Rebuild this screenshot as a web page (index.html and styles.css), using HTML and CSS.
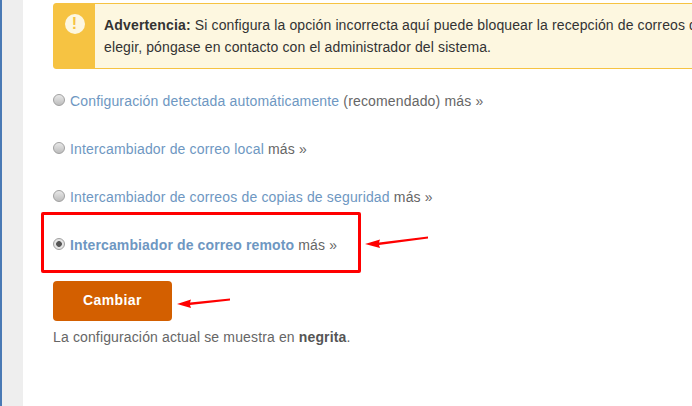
FILE: index.html
```html
<!DOCTYPE html>
<html lang="es">
<head>
    <meta charset="UTF-8">
    <meta name="viewport" content="width=device-width, initial-scale=1.0">
    <title>Enrutamiento de correo</title>
    <link rel="stylesheet" href="styles.css">
</head>
<body>
    <div class="side-nav"></div>
    <div class="content">
        <div class="alert">
            <div class="alert-icon">
                <span class="alert-badge">!</span>
            </div>
            <div class="alert-text">
                <strong>Advertencia:</strong> Si configura la opción incorrecta aquí puede bloquear la recepción de correos de<br>
                elegir, póngase en contacto con el administrador del sistema.
            </div>
        </div>
        <form class="options">
            <label class="option">
                <input type="radio" name="routing">
                <span><a href="#">Configuración detectada automáticamente</a> (recomendado) <span class="more">más »</span></span>
            </label>
            <label class="option">
                <input type="radio" name="routing">
                <span><a href="#">Intercambiador de correo local</a> <span class="more">más »</span></span>
            </label>
            <label class="option">
                <input type="radio" name="routing">
                <span><a href="#">Intercambiador de correos de copias de seguridad</a> <span class="more">más »</span></span>
            </label>
            <label class="option">
                <input type="radio" name="routing" checked>
                <span><a href="#" class="current">Intercambiador de correo remoto</a> <span class="more">más »</span></span>
            </label>
            <button type="button" class="submit-btn">Cambiar</button>
            <p class="note">La configuración actual se muestra en <strong>negrita</strong>.</p>
        </form>
    </div>

    <!-- screenshot annotations -->
    <div class="red-box"></div>
    <svg class="arrow arrow-radio" width="70" height="16" viewBox="0 0 70 16">
        <polygon points="0,11 15,6.5 14,9.5 63,3.5 63,5.5 14,12 15,15" fill="#f00"/>
    </svg>
    <svg class="arrow arrow-button" width="60" height="14" viewBox="0 0 60 14">
        <polygon points="0,9 14,4.5 13,7.5 53,3.5 53,5.5 13,10 14,13" fill="#f00"/>
    </svg>
</body>
</html>
```

FILE: styles.css
```css
html, body {
    height: 100%;
}
body {
    font-family: 'Liberation Sans', Arial, sans-serif;
    font-size: 14px;
    letter-spacing: 0.12px;
    margin: 0;
    display: flex;
    overflow: hidden;
    background: #fff;
    color: #666;
}
.side-nav {
    flex: none;
    width: 21px;
    background: #eee;
    border-left: 2px solid #4a7ab5;
}
.content {
    flex: none;
    padding: 3px 0 0 30px;
}
.alert {
    display: flex;
    width: 660px;
    height: 66px;
    box-sizing: border-box;
    border: 1px solid #f6c342;
    border-radius: 3px;
    background: #fdf7e0;
}
.alert-icon {
    flex: none;
    width: 41px;
    background: #f6c342;
    display: flex;
    justify-content: center;
    align-items: flex-start;
    padding-top: 10px;
    box-sizing: border-box;
}
.alert-badge {
    width: 20px;
    height: 20px;
    border-radius: 50%;
    background: #fdf7e0;
    color: #f6c342;
    font-size: 16px;
    font-weight: bold;
    line-height: 20px;
    text-align: center;
}
.alert-text {
    padding: 10px 0 0 9px;
    line-height: 22px;
    white-space: nowrap;
    color: #333;
}
.alert-text strong {
    letter-spacing: 0.17px;
}
.options {
    display: flex;
    flex-direction: column;
    align-items: flex-start;
    padding-top: 21px;
}
.option {
    display: flex;
    align-items: center;
    height: 22px;
    margin-bottom: 26px;
    letter-spacing: 0.16px;
}
.option:last-of-type {
    margin-bottom: 25px;
}
.option input {
    appearance: none;
    width: 12px;
    height: 12px;
    margin: 0 5px 3px 0;
    border: 1px solid #a0a0a0;
    border-radius: 50%;
    box-sizing: border-box;
    background: linear-gradient(#e8e8e8, #bdbdbd);
}
.option input:checked {
    background: radial-gradient(circle, #555 0 2.5px, #e4e4e4 3.2px);
}
.option a {
    color: #6e97c2;
    text-decoration: none;
}
.option a.current {
    font-weight: bold;
    letter-spacing: 0.13px;
}
.more {
    color: #666;
}
.submit-btn {
    width: 119px;
    height: 40px;
    padding: 0 0 2px;
    border: none;
    border-radius: 4px;
    background: #d35f00;
    color: #fff;
    font-family: inherit;
    font-size: 14px;
    font-weight: bold;
    letter-spacing: 0.4px;
}
.note {
    margin: 6px 0 0;
    line-height: 20px;
    letter-spacing: 0.14px;
}
.note strong {
    color: #555;
}
.red-box {
    position: absolute;
    left: 41px;
    top: 212px;
    width: 320px;
    height: 61px;
    box-sizing: border-box;
    border: 3px solid #f00;
    border-radius: 2px;
}
.arrow {
    position: absolute;
}
.arrow-radio {
    left: 365px;
    top: 233px;
}
.arrow-button {
    left: 177px;
    top: 295px;
}
```
